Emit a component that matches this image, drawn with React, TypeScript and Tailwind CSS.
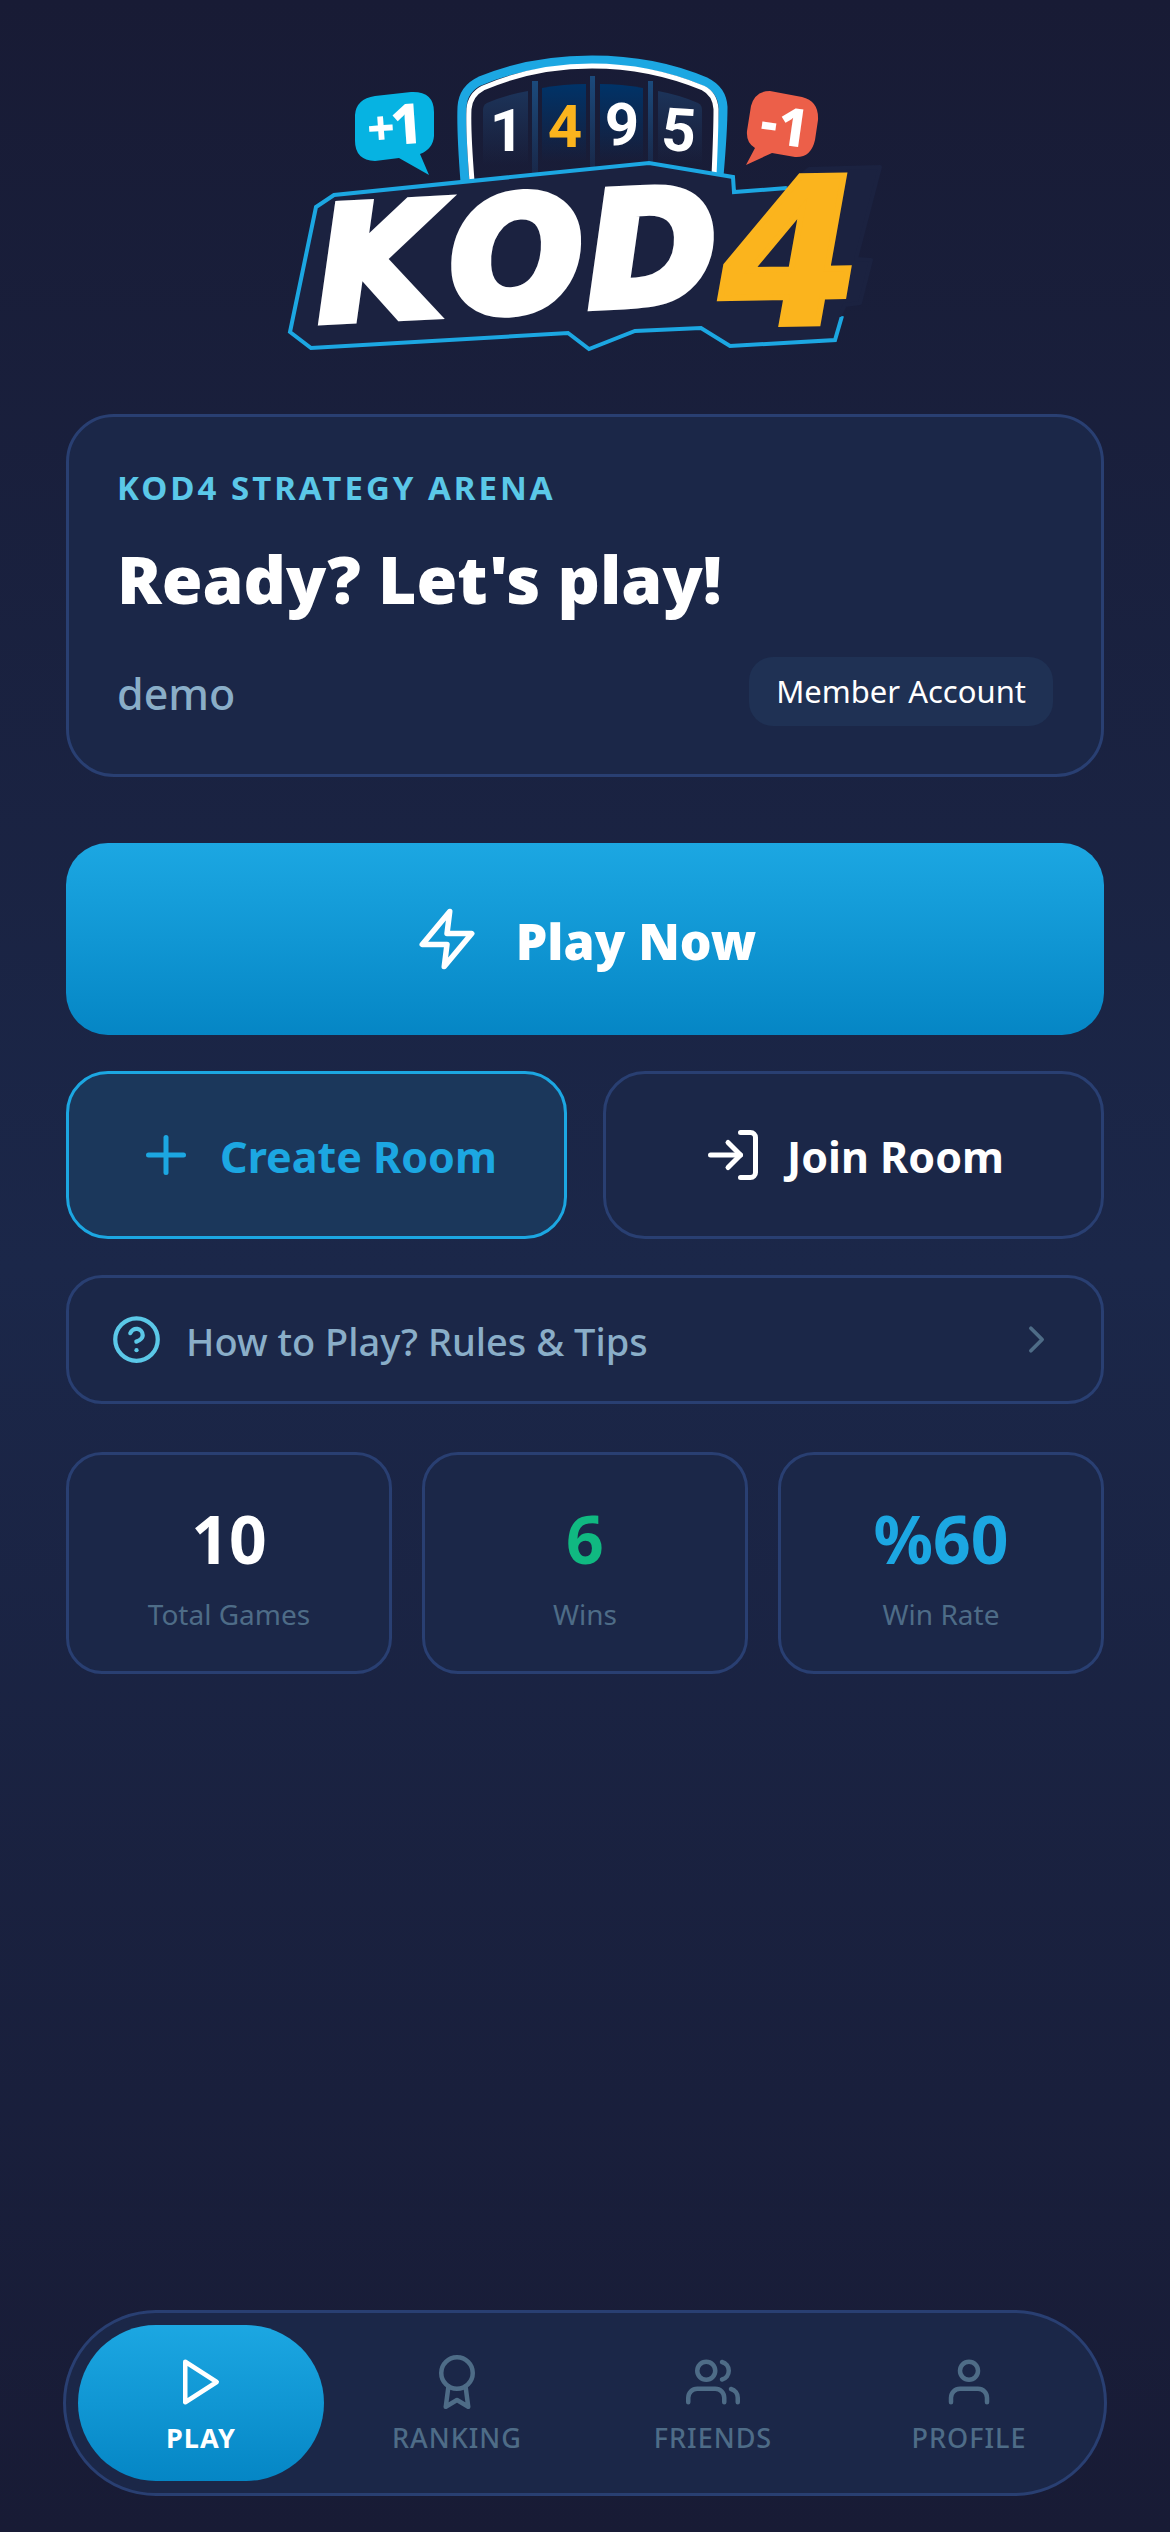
import React from "react";
import {
  FiAward,
  FiChevronRight,
  FiHelpCircle,
  FiLogIn,
  FiPlay,
  FiPlus,
  FiUser,
  FiUsers,
  FiZap,
} from "react-icons/fi";

const OUTLINE =
  "M334 195 L649 163 L733 177 L734 192 L803 187 L842 316 L835 340 L730 346 L701 328 L635 331 L589 349 L568 333 L311 348 L290 332 L316 207 Z";

function Logo() {
  return (
    <svg
      viewBox="275 48 620 306"
      className="block h-[306px] w-[620px] overflow-visible"
      role="img"
      aria-label="KOD4"
    >
      <defs>
        <linearGradient id="sideReel" x1="0" y1="0" x2="0" y2="1">
          <stop offset="0" stopColor="#1c3359" />
          <stop offset="1" stopColor="#1c3359" stopOpacity="0" />
        </linearGradient>
        <linearGradient id="midReel" x1="0" y1="0" x2="0" y2="1">
          <stop offset="0" stopColor="#003368" />
          <stop offset="1" stopColor="#003368" stopOpacity="0" />
        </linearGradient>
        <linearGradient id="bar" x1="0" y1="0" x2="0" y2="1">
          <stop offset="0" stopColor="#1b4a7c" />
          <stop offset="1" stopColor="#1b4a7c" stopOpacity="0.25" />
        </linearGradient>
      </defs>

      <path d="M483 165 V110 Q483 105 487 103 Q505 95 528 91 V165 Z" fill="url(#sideReel)" />
      <path d="M542 162 V88 Q564 84 586 84 V162 Z" fill="url(#midReel)" />
      <path d="M600 162 V84 Q622 84 643 88 V162 Z" fill="url(#midReel)" />
      <path d="M658 165 V91 Q680 95 698 103 Q702 105 702 110 V165 Z" fill="url(#sideReel)" />
      <rect x="532" y="81" width="6" height="93" fill="url(#bar)" />
      <rect x="590" y="76" width="5" height="93" fill="url(#bar)" />
      <rect x="648" y="81" width="5" height="85" fill="url(#bar)" />

      <g fontFamily="Roboto, sans-serif" fontWeight="700" fontSize="60" textAnchor="middle">
        <text x="507" y="151" fill="#ffffff">1</text>
        <text x="565" y="147" fill="#fbb41d">4</text>
        <text x="622" y="145" fill="#ffffff">9</text>
        <text x="679" y="151" fill="#ffffff" transform="rotate(4 679 130)">5</text>
      </g>

      <path
        d="M465 182 Q461 130 462 107 Q463 89 480 81 Q530 60 592 60 Q655 60 706 82 Q722 90 723 107 Q723 130 719 176"
        fill="none"
        stroke="#1ca7e2"
        strokeWidth="9"
      />
      <path
        d="M472 181 Q468 130 469 109 Q470 95 483 88 Q534 66 592 66 Q650 66 703 88 Q715 94 716 109 Q716 130 714 176"
        fill="none"
        stroke="#ffffff"
        strokeWidth="5"
      />

      <path d={OUTLINE} fill="#1b2240" />
      <path
        d="M842 316 L835 340 L730 346 L701 328 L635 331 L589 349 L568 333 L311 348 L290 332 L316 207 L334 195 L649 163 L733 177 L734 192 L787 188"
        fill="none"
        stroke="#1ca7e2"
        strokeWidth="4"
      />
      <path d="M787 188 L803 186" stroke="#15487c" strokeWidth="4" />
      <path
        d="M790 186 L809 169 L880 167 L856 259 L871 260 L860 303 L845 305 L840 315 L790 315 Z"
        fill="#1b2240"
        stroke="#1b2240"
        strokeWidth="4"
        strokeLinejoin="round"
      />

      <g
        fontFamily="'DejaVu Sans', sans-serif"
        fontWeight="700"
        fontStyle="italic"
        fontSize="157"
        fill="#ffffff"
        stroke="#ffffff"
        strokeWidth="9"
        transform="rotate(-3 320 325)"
      >
        <text x="320" y="321">K</text>
        <text x="453" y="321">O</text>
        <text x="590" y="321">D</text>
      </g>
      <text
        x="721"
        y="325"
        fontSize="202"
        fontFamily="'DejaVu Sans', sans-serif"
        fontWeight="700"
        fontStyle="italic"
        fill="#fbb41d"
        stroke="#fbb41d"
        strokeWidth="6"
        transform="rotate(-1 721 325)"
      >
        4
      </text>

      <path
        d="M375 96 L411 92 Q434 91 434 112 V136 Q433 149 420 154 L429 175 L399 158 L375 161 Q355 160 355 141 V115 Q356 99 375 96 Z"
        fill="#06b3e2"
      />
      <g
        fontFamily="'Noto Sans', sans-serif"
        fontWeight="800"
        fill="#ffffff"
        textAnchor="middle"
      >
        <text x="381" y="145" fontSize="48" transform="rotate(-4 381 130)">+</text>
        <text x="407" y="144" fontSize="56" transform="rotate(-4 407 130)">1</text>
      </g>

      <path
        d="M770 91 L802 97 Q819 101 818 120 L815 140 Q811 158 795 157 L772 153 L746 165 L755 148 Q746 143 747 131 L751 106 Q755 91 770 91 Z"
        fill="#ec5f49"
      />
      <g
        fontFamily="'Noto Sans', sans-serif"
        fontWeight="800"
        fill="#ffffff"
        textAnchor="middle"
      >
        <text x="769" y="140" fontSize="52" transform="rotate(8 769 125)">-</text>
        <text x="793" y="146" fontSize="53" transform="rotate(8 793 128)">1</text>
      </g>
    </svg>
  );
}

const stats = [
  { value: "10", label: "Total Games", color: "text-white" },
  { value: "6", label: "Wins", color: "text-[#10b981]" },
  { value: "%60", label: "Win Rate", color: "text-[#1ca7e2]" },
];

const tabs = [
  { label: "PLAY", Icon: FiPlay, active: true },
  { label: "RANKING", Icon: FiAward, active: false },
  { label: "FRIENDS", Icon: FiUsers, active: false },
  { label: "PROFILE", Icon: FiUser, active: false },
];

export default function App() {
  return (
    <div className="flex min-h-screen flex-col bg-linear-to-b/srgb from-[#181b35] via-[#1b2749] to-[#181b35] pt-12 pb-9 font-['Noto_Sans','Open_Sans',sans-serif] text-white">
      <main className="flex flex-1 flex-col px-[66px]">
        <div className="flex justify-center">
          <Logo />
        </div>

        <section className="mt-[60px] rounded-[48px] border-3 border-[#293f72] bg-[#1b2748] p-12">
          <p className="text-[33px] leading-[46px] font-bold tracking-[3px] text-[#5bc8e8]">
            KOD4 STRATEGY ARENA
          </p>
          <h1 className="mt-[22px] text-[66px] leading-[90px] font-black">Ready? Let's play!</h1>
          <div className="mt-[34px] flex items-center justify-between">
            <span className="pt-1 text-[43px] leading-[60px] font-medium text-[#8aaec8]">demo</span>
            <span className="rounded-3xl bg-[#1f3154] px-[27px] py-3 text-[31px] leading-[45px]">
              Member Account
            </span>
          </div>
        </section>

        <button className="mt-[66px] flex h-48 items-center justify-center gap-9 rounded-[42px] bg-linear-to-b/srgb from-[#1ca7e2] to-[#0586c5] text-[50px] font-black">
          <FiZap className="size-[66px]" />
          <span className="pt-1">Play Now</span>
        </button>

        <div className="mt-9 grid grid-cols-2 gap-9">
          <button className="flex h-[168px] items-center justify-center gap-6 rounded-[42px] border-3 border-[#1ca7e2] bg-[#1b375b] text-[43px] font-bold text-[#1ca7e2]">
            <FiPlus className="size-[60px]" />
            <span className="pt-1">Create Room</span>
          </button>
          <button className="flex h-[168px] items-center justify-center gap-6 rounded-[42px] border-3 border-[#293f72] bg-[#1b2748] text-[43px] font-bold">
            <FiLogIn className="size-[60px]" />
            <span className="pt-1">Join Room</span>
          </button>
        </div>

        <button className="mt-9 flex h-[129px] items-center gap-6 rounded-[36px] border-3 border-[#293f72] bg-[#1b2748] px-[42px] text-[38px] font-medium text-[#8aaec8]">
          <FiHelpCircle className="size-[51px] text-[#5bc8e8]" />
          <span className="flex-1 pt-1 text-left">How to Play? Rules &amp; Tips</span>
          <FiChevronRight className="size-[45px] text-[#4e6c87]" />
        </button>

        <dl className="mt-12 grid grid-cols-3 gap-[30px]">
          {stats.map((s) => (
            <div
              key={s.label}
              className="flex h-[222px] flex-col-reverse items-center justify-center rounded-[36px] border-3 border-[#293f72] bg-[#1b2748]"
            >
              <dt className="text-[28px] leading-[38px] text-[#4e6c87]">{s.label}</dt>
              <dd className={"mb-3 text-[66px] leading-[90px] font-bold " + s.color}>{s.value}</dd>
            </div>
          ))}
        </dl>
      </main>

      <nav className="mx-[63px] grid grid-cols-4 gap-[10px] rounded-full border-3 border-[#293f72] bg-[#1b2748] p-3">
        {tabs.map(({ label, Icon, active }) => (
          <button
            key={label}
            className={
              "flex h-39 flex-col items-center justify-center gap-[10px] rounded-full pt-[6px] text-[27px] leading-[38px] tracking-[1px] " +
              (active
                ? "bg-linear-to-b/srgb from-[#1ca7e2] to-[#0586c5] font-bold text-white"
                : "font-medium text-[#4e6c87]")
            }
          >
            <Icon className="size-[54px]" />
            {label}
          </button>
        ))}
      </nav>
    </div>
  );
}
